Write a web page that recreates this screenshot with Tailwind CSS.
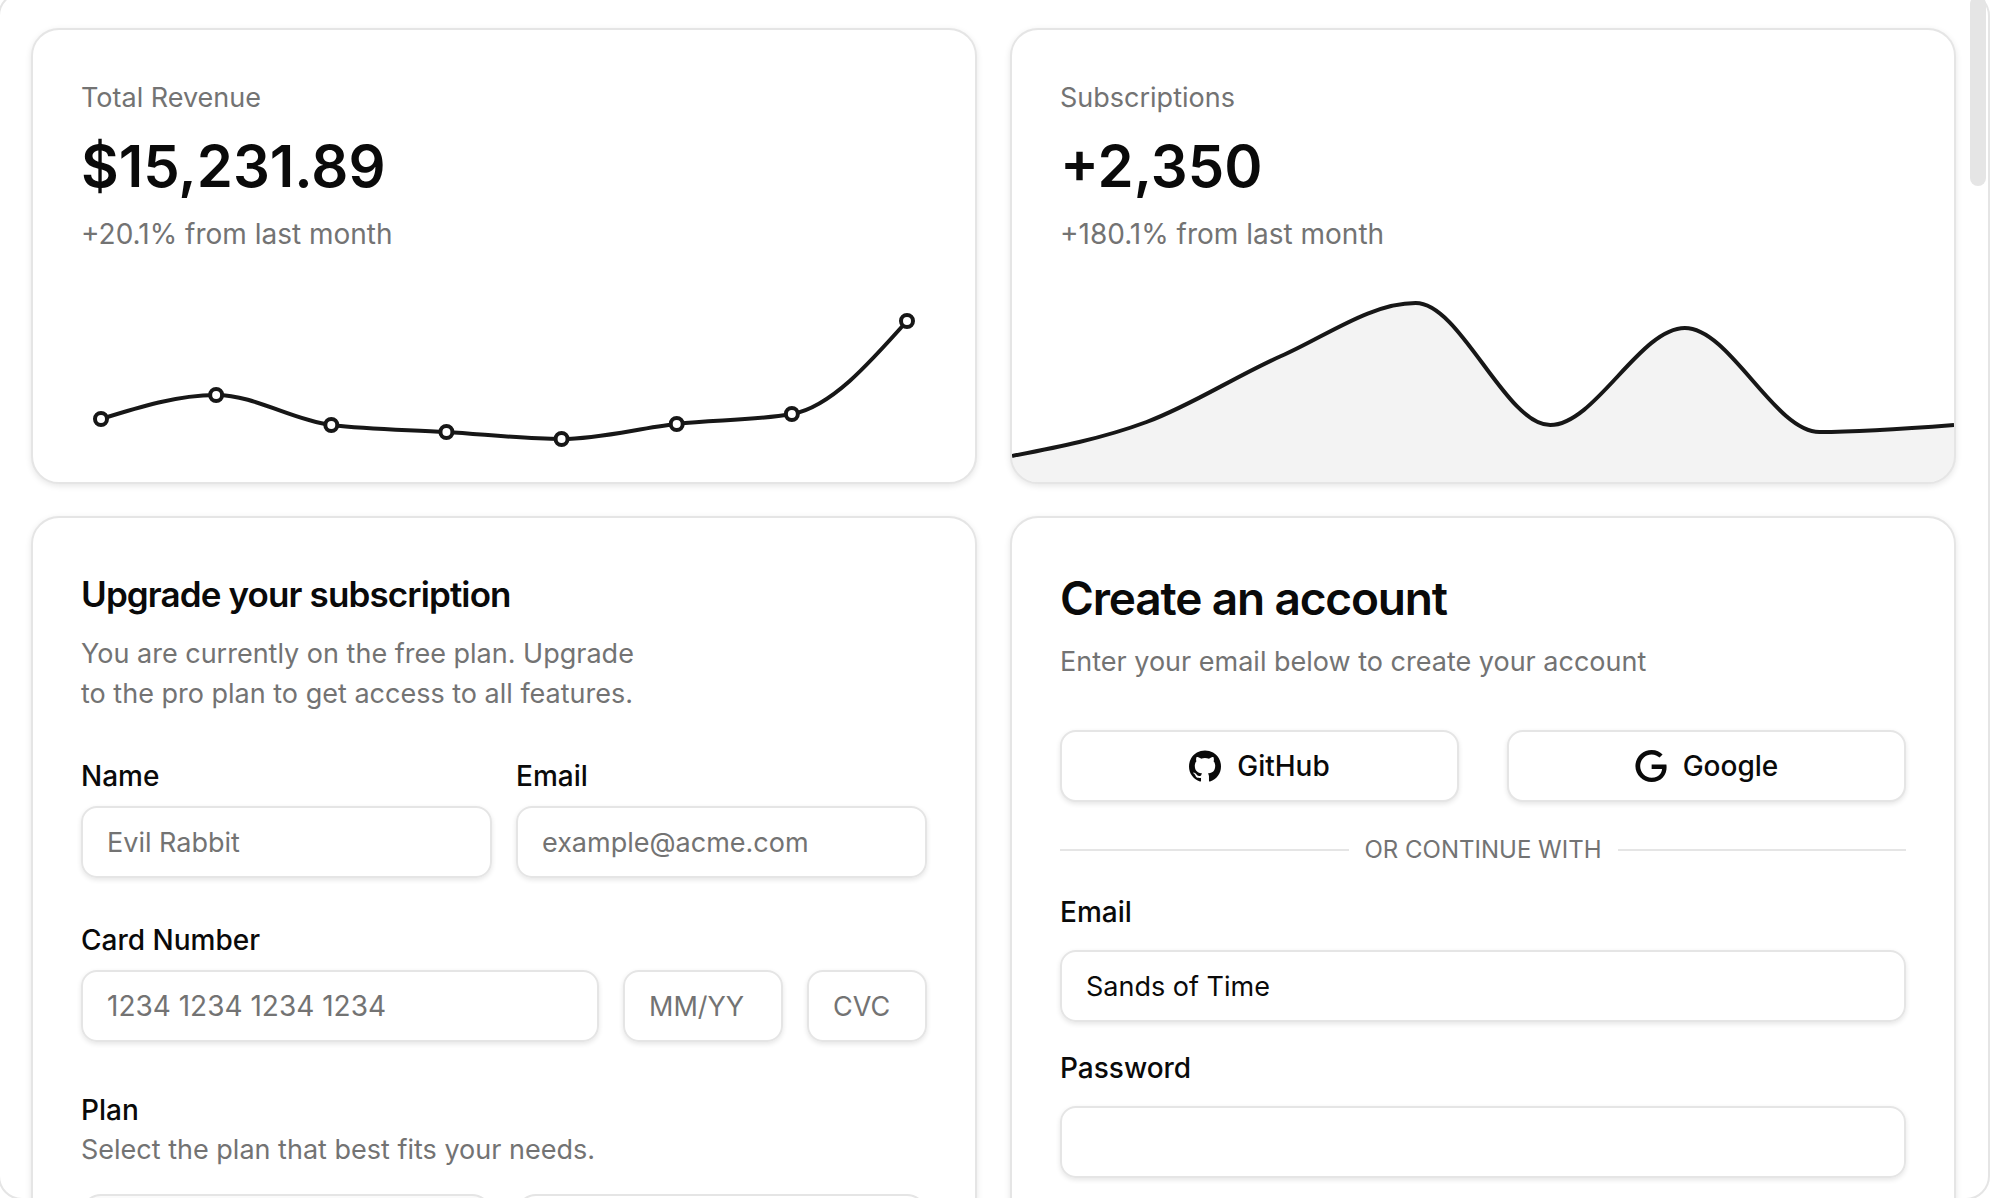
<!DOCTYPE html>
<html lang="en">
<head>
<meta charset="utf-8">
<meta name="viewport" content="width=device-width, initial-scale=1">
<title>Cards</title>
<script src="https://cdn.jsdelivr.net/npm/@tailwindcss/browser@4"></script>
</head>
<body class="relative h-screen overflow-hidden bg-white font-['Inter',sans-serif] text-[28px] leading-10 text-neutral-950 antialiased">
<main class="grid grid-cols-2 items-start gap-x-[33px] gap-y-8 pt-7 pr-[38px] pl-[31px]">

  <section class="overflow-hidden rounded-[28px] border-2 border-neutral-200 bg-white shadow-[0_2px_6px_rgba(0,0,0,0.1)]">
    <div class="flex flex-col gap-3 px-12 pt-12">
      <p class="text-[27px] text-neutral-500">Total Revenue</p>
      <p class="text-[58px] leading-[72px] font-semibold">$15,231.89</p>
      <p class="text-neutral-500">+20.1% from last month</p>
    </div>
    <svg class="block h-auto w-full" viewBox="0 0 942 228" fill="none" stroke="#171717" stroke-width="4" role="img" aria-label="Revenue over time">
      <path id="revenue-line"/>
      <g id="revenue-dots" fill="#fff"></g>
    </svg>
  </section>

  <section class="overflow-hidden rounded-[28px] border-2 border-neutral-200 bg-white shadow-[0_2px_6px_rgba(0,0,0,0.1)]">
    <div class="flex flex-col gap-3 px-12 pt-12">
      <p class="text-[27px] text-neutral-500">Subscriptions</p>
      <p class="text-[58px] leading-[72px] font-semibold">+2,350</p>
      <p class="text-neutral-500">+180.1% from last month</p>
    </div>
    <svg class="block h-auto w-full" viewBox="0 0 942 228" fill="none" role="img" aria-label="Subscriptions over time">
      <path id="subs-area" fill="#171717" fill-opacity="0.05"/>
      <path id="subs-line" stroke="#171717" stroke-width="4"/>
    </svg>
  </section>

  <section class="rounded-[28px] border-2 border-neutral-200 bg-white p-12 shadow-[0_2px_6px_rgba(0,0,0,0.1)]">
    <form class="flex flex-col gap-12">
      <header class="flex flex-col gap-3">
        <h2 class="text-[35px] leading-14 font-semibold tracking-tight">Upgrade your subscription</h2>
        <p class="text-[27px] text-neutral-500">You are currently on the free plan. Upgrade<br>to the pro plan to get access to all features.</p>
      </header>
      <div class="grid grid-cols-2 gap-6">
        <div class="flex flex-col gap-4">
          <label for="name" class="leading-7 font-medium">Name</label>
          <input id="name" type="text" placeholder="Evil Rabbit" class="h-18 w-full rounded-2xl border-2 border-neutral-200 px-6 text-[27px] shadow-[0_2px_5px_rgba(0,0,0,0.1)] placeholder:text-neutral-500">
        </div>
        <div class="flex flex-col gap-4">
          <label for="email" class="leading-7 font-medium">Email</label>
          <input id="email" type="email" placeholder="example@acme.com" class="h-18 w-full rounded-2xl border-2 border-neutral-200 px-6 text-[27px] shadow-[0_2px_5px_rgba(0,0,0,0.1)] placeholder:text-neutral-500">
        </div>
      </div>
      <div class="flex flex-col gap-4">
        <label for="card" class="leading-7 font-medium">Card Number</label>
        <div class="grid grid-cols-[1fr_160px_120px] gap-6">
          <input id="card" type="text" placeholder="1234 1234 1234 1234" class="h-18 w-full rounded-2xl border-2 border-neutral-200 px-6 shadow-[0_2px_5px_rgba(0,0,0,0.1)] placeholder:text-neutral-500">
          <input type="text" aria-label="Expiry date" placeholder="MM/YY" class="h-18 w-full rounded-2xl border-2 border-neutral-200 px-6 text-[27px] shadow-[0_2px_5px_rgba(0,0,0,0.1)] placeholder:text-neutral-500">
          <input type="text" aria-label="Security code" placeholder="CVC" class="h-18 w-full rounded-2xl border-2 border-neutral-200 px-6 text-[27px] shadow-[0_2px_5px_rgba(0,0,0,0.1)] placeholder:text-neutral-500">
        </div>
      </div>
      <fieldset>
        <legend class="font-medium">Plan</legend>
        <p class="text-[27px] text-neutral-500">Select the plan that best fits your needs.</p>
        <div class="mt-6 grid grid-cols-2 gap-6">
          <div class="h-40 rounded-[20px] border-2 border-neutral-200 bg-neutral-50"></div>
          <div class="h-40 rounded-[20px] border-2 border-neutral-200"></div>
        </div>
      </fieldset>
    </form>
  </section>

  <section class="rounded-[28px] border-2 border-neutral-200 bg-white p-12 shadow-[0_2px_6px_rgba(0,0,0,0.1)]">
    <header class="flex flex-col gap-3">
      <h2 class="text-[46px] leading-16 font-semibold tracking-tight">Create an account</h2>
      <p class="text-[27px] text-neutral-500">Enter your email below to create your account</p>
    </header>
    <form class="mt-12 flex flex-col gap-8">
      <div class="grid grid-cols-2 gap-12">
        <button type="button" class="flex h-18 items-center justify-center gap-4 rounded-2xl border-2 border-neutral-200 bg-white font-medium shadow-[0_2px_5px_rgba(0,0,0,0.1)]">
          <svg class="size-8" viewBox="0 0 438.549 438.549" fill="currentColor" aria-hidden="true"><path d="M409.132 114.573c-19.608-33.596-46.205-60.194-79.798-79.8-33.598-19.607-70.277-29.408-110.063-29.408-39.781 0-76.472 9.804-110.063 29.408-33.596 19.605-60.192 46.204-79.8 79.8C9.803 148.168 0 184.854 0 224.63c0 47.78 13.94 90.745 41.827 128.906 27.884 38.164 63.906 64.572 108.063 79.227 5.14.954 8.945.283 11.419-1.996 2.475-2.282 3.711-5.14 3.711-8.562 0-.571-.049-5.708-.144-15.417a2549.81 2549.81 0 01-.144-25.406l-6.567 1.136c-4.187.767-9.469 1.092-15.846 1-6.374-.089-12.991-.757-19.842-1.999-6.854-1.231-13.229-4.086-19.13-8.559-5.898-4.473-10.085-10.328-12.56-17.556l-2.855-6.57c-1.903-4.374-4.899-9.233-8.992-14.559-4.093-5.331-8.232-8.945-12.419-10.848l-1.999-1.431c-1.332-.951-2.568-2.098-3.711-3.429-1.142-1.331-1.997-2.663-2.568-3.997-.572-1.335-.098-2.43 1.427-3.289 1.525-.859 4.281-1.276 8.28-1.276l5.708.853c3.807.763 8.516 3.042 14.133 6.851 5.614 3.806 10.229 8.754 13.846 14.842 4.38 7.806 9.657 13.754 15.846 17.847 6.184 4.093 12.419 6.136 18.699 6.136 6.28 0 11.704-.476 16.274-1.423 4.565-.952 8.848-2.383 12.847-4.285 1.713-12.758 6.377-22.559 13.988-29.41-10.848-1.14-20.601-2.857-29.264-5.14-8.658-2.286-17.605-5.996-26.835-11.14-9.235-5.137-16.896-11.516-22.985-19.126-6.09-7.614-11.088-17.61-14.987-29.979-3.901-12.374-5.852-26.648-5.852-42.826 0-23.035 7.52-42.637 22.557-58.817-7.044-17.318-6.379-36.732 1.997-58.24 5.52-1.715 13.706-.428 24.554 3.853 10.85 4.283 18.794 7.952 23.84 10.994 5.046 3.041 9.089 5.618 12.135 7.708 17.705-4.947 35.976-7.421 54.818-7.421s37.117 2.474 54.823 7.421l10.849-6.849c7.419-4.57 16.18-8.758 26.262-12.565 10.088-3.805 17.802-4.853 23.134-3.138 8.562 21.509 9.325 40.922 2.279 58.24 15.036 16.18 22.559 35.787 22.559 58.817 0 16.178-1.958 30.497-5.853 42.966-3.9 12.471-8.941 22.457-15.125 29.979-6.191 7.521-13.901 13.85-23.131 18.986-9.232 5.14-18.182 8.85-26.84 11.136-8.662 2.286-18.415 4.004-29.263 5.146 9.894 8.562 14.842 22.077 14.842 40.539v60.237c0 3.422 1.19 6.279 3.572 8.562 2.379 2.279 6.136 2.95 11.276 1.995 44.163-14.653 80.185-41.062 108.068-79.226 27.88-38.161 41.825-81.126 41.825-128.906-.01-39.771-9.818-76.454-29.414-110.049z"/></svg>
          GitHub
        </button>
        <button type="button" class="flex h-18 items-center justify-center gap-4 rounded-2xl border-2 border-neutral-200 bg-white font-medium shadow-[0_2px_5px_rgba(0,0,0,0.1)]">
          <svg class="size-8" viewBox="0 0 24 24" fill="currentColor" aria-hidden="true"><path d="M12.48 10.92v3.28h7.84c-.24 1.84-.853 3.187-1.787 4.133-1.147 1.147-2.933 2.4-6.053 2.4-4.827 0-8.6-3.893-8.6-8.72s3.773-8.72 8.6-8.72c2.6 0 4.507 1.027 5.907 2.347l2.307-2.307C18.747 1.44 16.133 0 12.48 0 5.867 0 .307 5.387.307 12s5.56 12 12.173 12c3.573 0 6.267-1.173 8.373-3.36 2.16-2.16 2.84-5.213 2.84-7.667 0-.76-.053-1.467-.173-2.053H12.48z"/></svg>
          Google
        </button>
      </div>
      <div class="flex items-center gap-4">
        <div class="h-0.5 flex-1 bg-neutral-200"></div>
        <span class="text-2xl text-neutral-500 uppercase">Or continue with</span>
        <div class="h-0.5 flex-1 bg-neutral-200"></div>
      </div>
      <div class="flex flex-col gap-6">
        <label for="account-email" class="leading-7 font-medium">Email</label>
        <input id="account-email" type="text" value="Sands of Time" class="h-18 w-full rounded-2xl border-2 border-neutral-200 px-6 text-[27px] shadow-[0_2px_5px_rgba(0,0,0,0.1)]">
      </div>
      <div class="flex flex-col gap-6">
        <label for="password" class="leading-7 font-medium">Password</label>
        <input id="password" type="password" class="h-18 w-full rounded-2xl border-2 border-neutral-200 px-6 text-[27px] shadow-[0_2px_5px_rgba(0,0,0,0.1)]">
      </div>
    </form>
  </section>
</main>

<!-- window frame and scroll thumb, over the content -->
<div class="pointer-events-none absolute -top-2 right-1 -bottom-0.5 -left-0.5 rounded-3xl border-2 border-neutral-200"></div>
<div class="absolute -top-1 right-2 h-[190px] w-4 rounded-full bg-neutral-200"></div>

<script>
  // Monotone cubic interpolation through evenly spaced points
  function monotone(p) {
    const n = p.length, s = [], t = [];
    for (let i = 0; i < n - 1; i++) s.push((p[i + 1][1] - p[i][1]) / (p[i + 1][0] - p[i][0]));
    for (let i = 1; i < n - 1; i++) {
      const a = s[i - 1], b = s[i];
      t[i] = a * b <= 0 ? 0 : Math.sign(a) * 2 * Math.min(Math.abs(a), Math.abs(b), Math.abs(a + b) / 4);
    }
    t[0] = (3 * s[0] - t[1]) / 2;
    t[n - 1] = (3 * s[n - 2] - t[n - 2]) / 2;
    let d = `M${p[0]}`;
    for (let i = 0; i < n - 1; i++) {
      const h = (p[i + 1][0] - p[i][0]) / 3;
      d += `C${p[i][0] + h},${p[i][1] + h * t[i]},${p[i + 1][0] - h},${p[i + 1][1] - h * t[i + 1]},${p[i + 1]}`;
    }
    return d;
  }
  const spread = (ys, x0, x1) => ys.map((y, i) => [x0 + (x1 - x0) * i / (ys.length - 1), y]);
  const revenue = spread([165, 141, 171, 178, 185, 170, 160, 67], 68, 874);
  const subs = spread([202, 168, 102, 49, 171, 74, 178, 171], 0, 942);
  document.getElementById('revenue-line').setAttribute('d', monotone(revenue));
  document.getElementById('revenue-dots').innerHTML = revenue.map(([x, y]) => `<circle cx="${x}" cy="${y}" r="6"/>`).join('');
  document.getElementById('subs-line').setAttribute('d', monotone(subs));
  document.getElementById('subs-area').setAttribute('d', monotone(subs) + 'V228H0Z');
</script>
</body>
</html>
